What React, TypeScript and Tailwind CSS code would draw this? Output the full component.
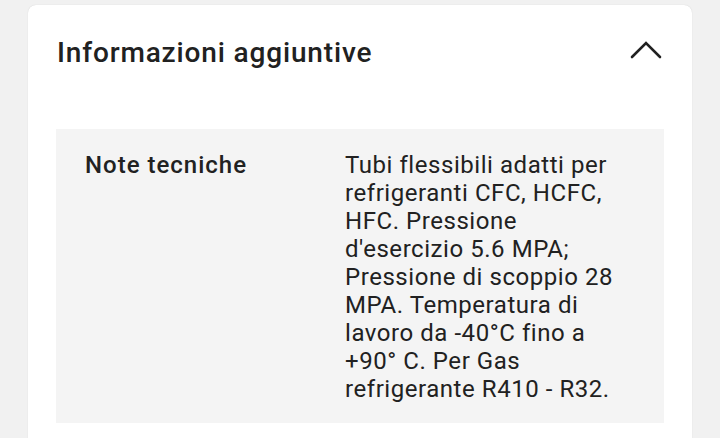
import { useState } from "react";

const note =
  "Tubi flessibili adatti per refrigeranti CFC, HCFC, HFC. Pressione d'esercizio 5.6 MPA; Pressione di scoppio 28 MPA. Temperatura di lavoro da -40°C fino a +90° C. Per Gas refrigerante R410 - R32.";

function App() {
  const [open, setOpen] = useState<boolean>(true);

  return (
    <main className="h-screen w-full overflow-hidden bg-[#f1f1f1] px-[28px] pt-[5px] font-['Roboto',sans-serif] text-[#212121]">
      <section className="w-[664px] rounded-[8px] bg-white pb-[28px] shadow-[0_0_1px_rgba(0,0,0,0.18)]">
        <button
          onClick={() => setOpen(!open)}
          className="flex w-full items-center justify-between pl-[29px] pr-[30px] pt-[32px] pb-[33px] text-left"
        >
          <h2 className="text-[28px] font-medium leading-[32px] tracking-[0.85px]">
            Informazioni aggiuntive
          </h2>
          <svg
            width="32"
            height="18"
            viewBox="0 0 32 18"
            fill="none"
            stroke="#212121"
            strokeWidth="2.6"
            strokeLinecap="round"
            className={open ? "mb-[6px]" : "mb-[6px] rotate-180"}
          >
            <path d="M2 16 L16 2 L30 16" />
          </svg>
        </button>
        {open && (
          <div className="px-[28px] pt-[27px]">
            <div className="grid grid-cols-[260px_1fr] bg-[#f4f4f4] pl-[29px] pr-[29px] pt-[22px] pb-[20px]">
              <div className="text-[24px] font-medium leading-[28px] tracking-[1px]">
                Note tecniche
              </div>
              <p className="text-[24px] leading-[28px] tracking-[0.55px]">{note}</p>
            </div>
          </div>
        )}
      </section>
    </main>
  );
}

export default App;
